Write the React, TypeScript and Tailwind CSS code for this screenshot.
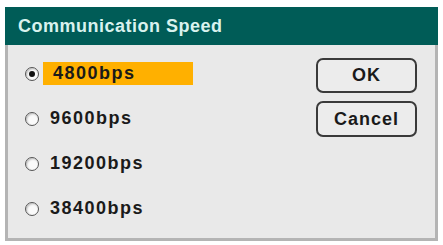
import React from "react";

const speeds = ["4800bps", "9600bps", "19200bps", "38400bps"];

const Radio = ({ checked }: { checked: boolean }) => (
  <span className="flex h-[14px] w-[14px] shrink-0 items-center justify-center rounded-full border-[1.5px] border-[#555] bg-[#fafafa] shadow-[inset_1px_1px_2px_rgba(0,0,0,0.25)]">
    {checked && <span className="h-[6px] w-[6px] rounded-full bg-[#111]" />}
  </span>
);

const App = () => {
  const selected = 0;

  return (
    <div className="h-[245px] w-[443px] bg-white pl-[5px] pt-[7px] font-['Liberation_Sans',Arial,sans-serif]">
      <div className="flex h-[234px] w-[433px] flex-col">
        <div className="flex h-[38px] items-center bg-[#005c57] pl-[13px] text-[18px] font-bold tracking-[0.5px] text-[#d9f2ee]">
          Communication Speed
        </div>
        <div className="flex flex-1 justify-between border-x-[3px] border-b-[3px] border-[#b4b4b4] bg-[#e9e9e9]">
          <div className="flex flex-col gap-[22px] pl-[17px] pt-[17px]">
            {speeds.map((s, i) => (
              <div key={s} className="flex h-[23px] items-center">
                <Radio checked={i === selected} />
                <span
                  className={
                    i === selected
                      ? "ml-[4px] flex h-[23px] w-[150px] items-center bg-[#ffb000] pl-[10px] text-[18px] font-bold tracking-[1.5px] text-[#1a1a1a]"
                      : "ml-[4px] flex h-[23px] items-center pl-[7px] text-[18px] font-bold tracking-[1.5px] text-[#1a1a1a]"
                  }
                >
                  {s}
                </span>
              </div>
            ))}
          </div>
          <div className="flex flex-col gap-[8px] pr-[18px] pt-[13px]">
            <button className="flex h-[35px] w-[101px] items-center justify-center rounded-[7px] border-2 border-[#3a3a3a] bg-[#ececec] text-[18px] font-bold tracking-[1px] text-[#1a1a1a]">
              OK
            </button>
            <button className="flex h-[36px] w-[101px] items-center justify-center rounded-[7px] border-2 border-[#3a3a3a] bg-[#ececec] text-[18px] font-bold tracking-[1px] text-[#1a1a1a]">
              Cancel
            </button>
          </div>
        </div>
      </div>
    </div>
  );
};

export default App;
